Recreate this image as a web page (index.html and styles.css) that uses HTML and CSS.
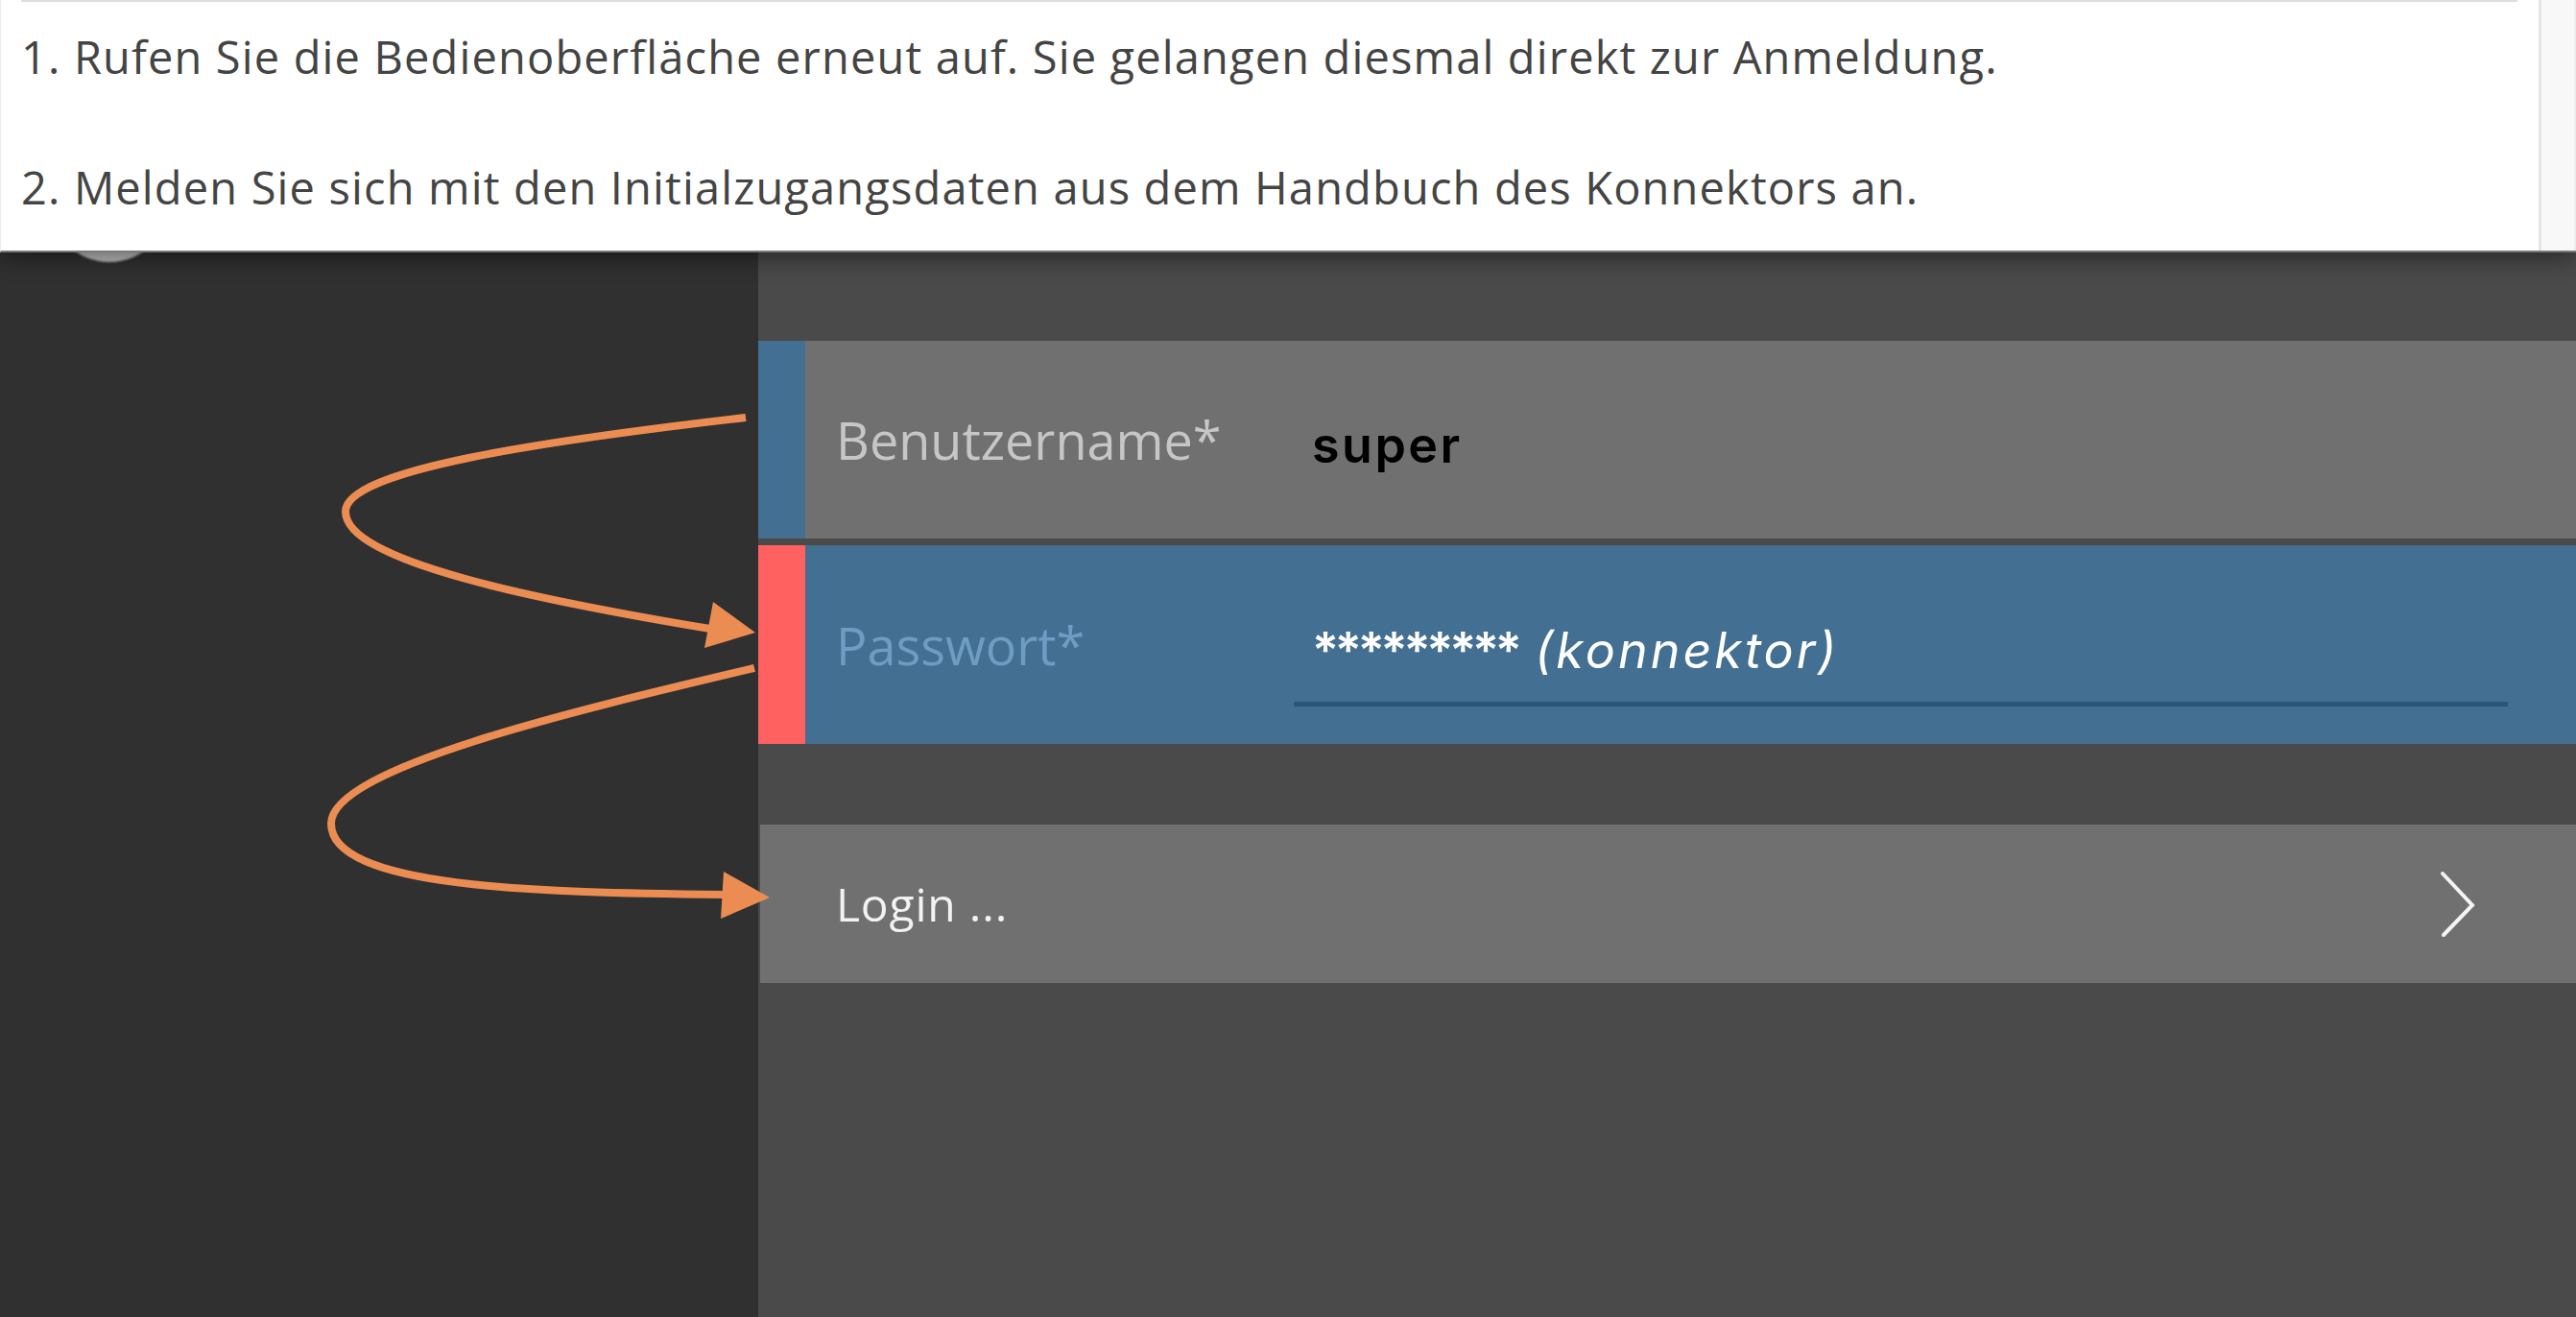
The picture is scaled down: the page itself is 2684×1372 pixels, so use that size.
FILE: index.html
```html
<!DOCTYPE html>
<html lang="de">
<head>
<meta charset="utf-8">
<title>Anmeldung</title>
<link rel="stylesheet" href="styles.css">
</head>
<body>
<div class="page">
  <section class="note">
    <div class="note-content">
      <div class="note-rule"></div>
      <div class="steps">
        <p class="step">1. Rufen Sie die Bedienoberfläche erneut auf. Sie gelangen diesmal direkt zur Anmeldung.</p>
        <p class="step">2. Melden Sie sich mit den Initialzugangsdaten aus dem Handbuch des Konnektors an.</p>
      </div>
    </div>
    <div class="scrollbar"></div>
  </section>

  <div class="app">
    <aside class="sidebar">
      <div class="avatar"></div>
    </aside>
    <main class="main">
      <div class="field field-user">
        <div class="field-bar"></div>
        <div class="field-label">Benutzername*</div>
        <div class="field-value">super</div>
      </div>
      <div class="field field-password">
        <div class="field-bar"></div>
        <div class="field-label">Passwort*</div>
        <div class="field-value"><span class="stars">*********</span> <em class="hint">(konnektor)</em></div>
      </div>
      <div class="login">
        <span class="login-text">Login ...</span>
        <svg class="chevron" width="40" height="72" viewBox="0 0 40 72">
          <polyline points="4,4 35,37 5,68" fill="none" stroke="#f4f4f4" stroke-width="4" stroke-linecap="round" stroke-linejoin="miter"/>
        </svg>
      </div>
    </main>
  </div>

  <svg class="arrows" width="2684" height="1372" viewBox="0 0 2684 1372">
    <path d="M777,435 C560,460 360,490 360,533 C360,585 560,625 740,655" fill="none" stroke="#eb8c52" stroke-width="8"/>
    <polygon points="787,659 743,627 734,675" fill="#eb8c52"/>
    <path d="M786,696 C600,740 345,800 345,858 C345,925 560,930 755,932" fill="none" stroke="#eb8c52" stroke-width="8"/>
    <polygon points="802,935 754,908 751,957" fill="#eb8c52"/>
  </svg>
</div>
</body>
</html>
```

FILE: styles.css
```css
html, body {
  margin: 0;
  padding: 0;
  background: #4a4a4a;
}

.page {
  position: relative;
  width: 2684px;
  height: 1372px;
  overflow: hidden;
}

/* ---------- white instruction note ---------- */
.note {
  position: relative;
  z-index: 2;
  display: flex;
  height: 263px;
  box-sizing: border-box;
  background: #ffffff;
  border-left: 1px solid #ececec;
  border-bottom: 2px solid #7a7a7a;
  box-shadow: 0 6px 22px rgba(0, 0, 0, 0.45);
}

.note-content {
  flex: 1;
  display: flex;
  flex-direction: column;
}

.note-rule {
  height: 2px;
  background: #dedede;
  margin: 0 22px 0 21px;
}

.steps {
  display: flex;
  flex-direction: column;
  gap: 68px;
  padding: 23px 0 0 21px;
}

.step {
  margin: 0;
  font-family: "Open Sans", "Noto Sans", sans-serif;
  font-size: 47px;
  line-height: 68px;
  letter-spacing: 1.15px;
  color: #444444;
}

.scrollbar {
  width: 39px;
  box-sizing: border-box;
  background: #f8f8f8;
  border-left: 3px solid #e6e6e6;
  border-right: 2px solid #ececec;
}

/* ---------- app screenshot ---------- */
.app {
  display: flex;
  height: 1109px;
}

.sidebar {
  position: relative;
  width: 790px;
  flex: none;
  background: #303030;
}

.avatar {
  position: absolute;
  left: 51px;
  top: -116px;
  width: 126px;
  height: 126px;
  border-radius: 50%;
  background: #bdbdbd;
  filter: blur(1px);
}

.main {
  flex: 1;
  display: flex;
  flex-direction: column;
  padding-top: 92px;
  background: #4a4a4a;
}

.field {
  display: flex;
  height: 206px;
  background: #707070;
}

.field-password {
  height: 207px;
  margin-top: 7px;
  background: #436f92;
}

.field-bar {
  width: 49px;
  flex: none;
  background: #436f92;
}

.field-password .field-bar {
  background: #ff6161;
}

.field-label {
  width: 477px;
  flex: none;
  margin-left: 32px;
  align-self: center;
  font-family: "Open Sans", "Noto Sans", sans-serif;
  font-size: 54px;
  color: #c6c6c6;
  filter: blur(0.7px);
}

.field-password .field-label {
  color: #6e9cc3;
}

.field-value {
  width: 1265px;
  box-sizing: border-box;
  align-self: flex-end;
  margin-bottom: 39px;
  padding: 0 0 23px 19px;
  border-bottom: 5px solid transparent;
  font-family: Inter, "Liberation Sans", sans-serif;
  font-weight: 600;
  font-size: 52px;
  line-height: 60px;
  letter-spacing: 2.5px;
  color: #000000;
}

.field-password .field-value {
  border-bottom-color: #2a5576;
  color: #ffffff;
  font-weight: 400;
  letter-spacing: 3px;
}

.stars {
  font-weight: 600;
  letter-spacing: -4.2px;
}

.hint {
  font-style: italic;
}

.login {
  display: flex;
  align-items: center;
  justify-content: space-between;
  height: 165px;
  margin: 84px 0 0 2px;
  padding: 0 103px 0 79px;
  background: #707070;
}

.login-text {
  font-family: "Open Sans", "Noto Sans", sans-serif;
  font-size: 48px;
  letter-spacing: 0.8px;
  color: #f2f2f2;
  filter: blur(0.6px);
}

.chevron {
  display: block;
  filter: blur(0.6px);
}

/* ---------- annotation arrows ---------- */
.arrows {
  position: absolute;
  top: 0;
  left: 0;
  z-index: 3;
  pointer-events: none;
}
```
